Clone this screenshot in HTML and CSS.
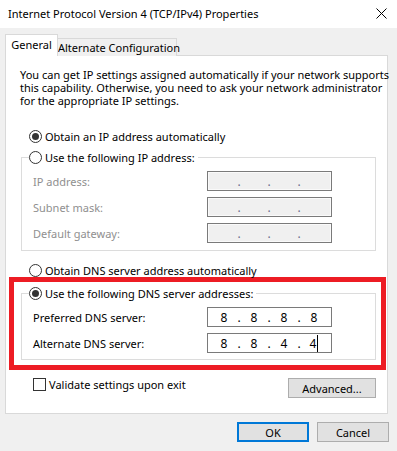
FILE: index.html
```html
<!DOCTYPE html>
<html>
<head>
    <title>Internet Protocol Version 4 (TCP/IPv4) Properties</title>
    <meta name="viewport" content="width=device-width, initial-scale=1" />
    <link rel="stylesheet" href="styles.css">
</head>
<body>
    <div class="titlebar">
        <span class="title">Internet Protocol Version 4 (TCP/IPv4) Properties</span>
        <svg class="close" width="11" height="11" viewBox="0 0 11 11">
            <path d="M0.5 0.5 L10.5 10.5 M10.5 0.5 L0.5 10.5" stroke="#000" stroke-width="1" fill="none" />
        </svg>
    </div>

    <div class="tabs">
        <div class="tab active">General</div>
        <div class="tab">Alternate Configuration</div>
    </div>

    <div class="panel">
        <p class="intro">You can get IP settings assigned automatically if your network supports<br>this capability. Otherwise, you need to ask your network administrator<br>for the appropriate IP settings.</p>

        <div class="radio-row first"><span class="radio checked"></span>Obtain an IP address automatically</div>

        <fieldset class="group">
            <legend><span class="legend-inner"><span class="radio"></span>Use the following IP address:</span></legend>
            <div class="field-row disabled">
                <span class="field-label">IP address:</span>
                <div class="ip-box"><span class="octet"></span><span class="dot">.</span><span class="octet"></span><span class="dot">.</span><span class="octet"></span><span class="dot">.</span><span class="octet"></span></div>
            </div>
            <div class="field-row disabled">
                <span class="field-label">Subnet mask:</span>
                <div class="ip-box"><span class="octet"></span><span class="dot">.</span><span class="octet"></span><span class="dot">.</span><span class="octet"></span><span class="dot">.</span><span class="octet"></span></div>
            </div>
            <div class="field-row disabled">
                <span class="field-label">Default gateway:</span>
                <div class="ip-box"><span class="octet"></span><span class="dot">.</span><span class="octet"></span><span class="dot">.</span><span class="octet"></span><span class="dot">.</span><span class="octet"></span></div>
            </div>
        </fieldset>

        <div class="radio-row dns-auto"><span class="radio"></span>Obtain DNS server address automatically</div>

        <div class="highlight">
            <fieldset class="group dns">
                <legend><span class="legend-inner"><span class="radio checked"></span>Use the following DNS server addresses:</span></legend>
                <div class="field-row">
                    <span class="field-label">Preferred DNS server:</span>
                    <div class="ip-box"><span class="octet">8</span><span class="dot">.</span><span class="octet">8</span><span class="dot">.</span><span class="octet">8</span><span class="dot">.</span><span class="octet">8</span></div>
                </div>
                <div class="field-row">
                    <span class="field-label">Alternate DNS server:</span>
                    <div class="ip-box"><span class="octet">8</span><span class="dot">.</span><span class="octet">8</span><span class="dot">.</span><span class="octet">4</span><span class="dot">.</span><span class="octet"><span class="caret">4</span></span></div>
                </div>
            </fieldset>
        </div>

        <div class="options">
            <div class="check-row"><span class="checkbox"></span>Validate settings upon exit</div>
            <button class="btn advanced">Advanced...</button>
        </div>
    </div>

    <div class="footer">
        <button class="btn ok">OK</button>
        <button class="btn cancel">Cancel</button>
    </div>
</body>
</html>
```

FILE: styles.css
```css
body {
    margin: 0;
    width: 397px;
    height: 451px;
    overflow: hidden;
    background-color: #f0f0f0;
    font-family: "Noto Sans", sans-serif;
    font-size: 11px;
    color: #000;
}

.titlebar {
    height: 28px;
    background-color: #fff;
    display: flex;
    align-items: center;
    justify-content: space-between;
    padding: 0 10px 2px 8px;
    box-sizing: border-box;
}

.title {
    white-space: nowrap;
}

.tabs {
    display: flex;
    align-items: flex-end;
    height: 22px;
    margin: 6px 0 -1px 5px;
}

.tab {
    height: 17px;
    width: 118px;
    line-height: 17px;
    text-align: center;
    border: 1px solid #d9d9d9;
    border-bottom: none;
    border-left: none;
    background-color: #f0f0f0;
    white-space: nowrap;
}

.tab.active {
    position: relative;
    z-index: 1;
    height: 21px;
    width: 51px;
    line-height: 19px;
    border-left: 1px solid #d9d9d9;
    background-color: #fff;
}

.panel {
    background-color: #fff;
    border: 1px solid #d9d9d9;
    margin: 0 9px 0 5px;
    padding: 12px 11px 0 14px;
    height: 359px;
    box-sizing: border-box;
}

.intro {
    margin: 0;
    line-height: 13px;
    white-space: nowrap;
}

.radio-row {
    display: flex;
    align-items: center;
    gap: 3px;
    height: 16px;
    margin-left: 9px;
    white-space: nowrap;
}

.radio-row.first {
    margin-top: 21px;
}

.radio-row.dns-auto {
    margin-top: 11px;
}

.radio {
    width: 13px;
    height: 13px;
    border: 1px solid #333;
    border-radius: 50%;
    box-sizing: border-box;
    background-color: #fff;
    display: flex;
    align-items: center;
    justify-content: center;
    flex-shrink: 0;
}

.radio.checked::after {
    content: "";
    width: 7px;
    height: 7px;
    border-radius: 50%;
    background-color: #333;
}

.group {
    margin: 5px 0 0 1px;
    padding: 6px 0 7px 0;
    border: 1px solid #dcdcdc;
    min-inline-size: 0;
}

.group.dns {
    margin: 0;
    padding: 6px 0 6px 0;
}

legend {
    margin-left: 7px;
    padding: 0 3px 0 0;
}

.legend-inner {
    display: flex;
    align-items: center;
    gap: 3px;
    height: 16px;
    white-space: nowrap;
}

.field-row {
    display: flex;
    align-items: center;
    height: 20px;
    margin-left: 11px;
}

.field-row + .field-row {
    margin-top: 6px;
}

.field-label {
    width: 174px;
}

.disabled .field-label {
    color: #8f8f8f;
}

.ip-box {
    width: 125px;
    height: 20px;
    box-sizing: border-box;
    border: 1px solid #7a7a7a;
    padding-left: 2px;
    display: flex;
    align-items: center;
    background-color: #fff;
    font-size: 12px;
}

.disabled .ip-box {
    background-color: #f0f0f0;
    box-shadow: inset 0 0 0 1px #fafafa;
    color: #6d6d8d;
}

.octet {
    width: 28px;
    text-align: center;
}

.dot {
    width: 2px;
    display: flex;
    justify-content: center;
}

.caret {
    border-right: 1px solid #000;
    padding-right: 1px;
}

.highlight {
    border: 5px solid #ed1c24;
    margin: -1px -10px 0 -11px;
    padding: 3px 5px 5px 7px;
}

.options {
    display: flex;
    justify-content: space-between;
    align-items: flex-start;
    margin-top: 8px;
}

.check-row {
    display: flex;
    align-items: center;
    gap: 3px;
    height: 13px;
    margin-left: 13px;
    white-space: nowrap;
}

.checkbox {
    width: 13px;
    height: 13px;
    border: 1px solid #333;
    box-sizing: border-box;
    background-color: #fff;
}

.btn {
    height: 20px;
    padding: 0;
    border: 1px solid #adadad;
    background-color: #e1e1e1;
    font-family: "Noto Sans", sans-serif;
    font-size: 11px;
    color: #000;
    box-sizing: border-box;
}

.btn.advanced {
    width: 88px;
}

.footer {
    display: flex;
    justify-content: flex-end;
    gap: 8px;
    margin: 8px 8px 0 0;
}

.btn.ok {
    width: 72px;
    border: 2px solid #0078d7;
}

.btn.cancel {
    width: 72px;
}
```
